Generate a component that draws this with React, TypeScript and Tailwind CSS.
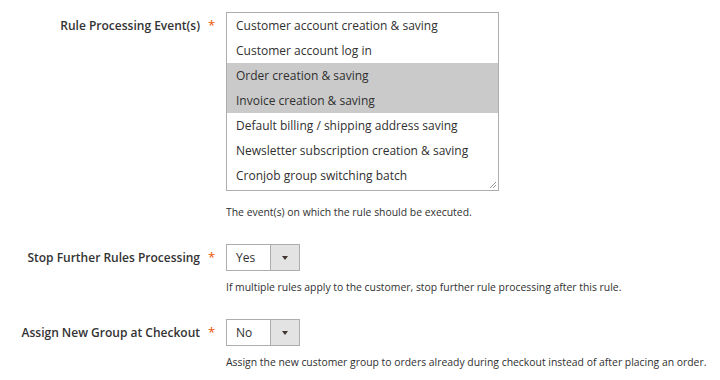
const events = [
  { label: "Customer account creation & saving", selected: false },
  { label: "Customer account log in", selected: false },
  { label: "Order creation & saving", selected: true },
  { label: "Invoice creation & saving", selected: true },
  { label: "Default billing / shipping address saving", selected: false },
  { label: "Newsletter subscription creation & saving", selected: false },
  { label: "Cronjob group switching batch", selected: false },
];

function FieldLabel({ text }: { text: string }) {
  return (
    <div className="flex shrink-0 items-center">
      <div className="w-[200px] text-right text-[12px] font-semibold text-[#333333]">
        {text}
      </div>
      <div className="w-[26px] pl-[8px] text-[13px] text-[#eb5202]">*</div>
    </div>
  );
}

function SelectBox({ value }: { value: string }) {
  return (
    <div className="flex h-[27px] w-[74px] border border-[#adadad] bg-white">
      <div className="flex flex-1 items-center pl-[9px] text-[12px] text-[#303030]">
        {value}
      </div>
      <div className="flex w-[29px] items-center justify-center border-l border-[#adadad] bg-[#e3e3e3]">
        <span className="h-0 w-0 border-x-[3.5px] border-t-[4px] border-x-transparent border-t-[#41362f]" />
      </div>
    </div>
  );
}

function HelpText({ text }: { text: string }) {
  return (
    <div className="text-[10.4px] leading-[16px] text-[#303030]">{text}</div>
  );
}

export default function App() {
  return (
    <div
      className="h-[380px] w-[720px] overflow-hidden bg-white pt-[12px]"
      style={{ fontFamily: '"Open Sans", sans-serif' }}
    >
      {/* Rule Processing Events */}
      <div className="flex">
        <div className="flex h-[28px] items-center">
          <FieldLabel text="Rule Processing Event(s)" />
        </div>
        <div>
          <div className="relative w-[273px] border border-[#adadad] bg-white pb-[2px]">
            {events.map((e) => (
              <div
                key={e.label}
                className={
                  "h-[25px] px-[9px] pt-[1px] text-[12px] leading-[24px] text-[#303030] " +
                  (e.selected ? "bg-[#cacaca]" : "")
                }
              >
                {e.label}
              </div>
            ))}
            <svg
              className="absolute bottom-[1px] right-[1px]"
              width="8"
              height="8"
              viewBox="0 0 8 8"
            >
              <path d="M7 1 L1 7 M7 4 L4 7" stroke="#9a9a9a" strokeWidth="1" />
            </svg>
          </div>
          <div className="mt-[13px]">
            <HelpText text="The event(s) on which the rule should be executed." />
          </div>
        </div>
      </div>

      {/* Stop Further Rules Processing */}
      <div className="mt-[24px] flex">
        <div className="flex h-[27px] items-center">
          <FieldLabel text="Stop Further Rules Processing" />
        </div>
        <div>
          <SelectBox value="Yes" />
          <div className="mt-[8px]">
            <HelpText text="If multiple rules apply to the customer, stop further rule processing after this rule." />
          </div>
        </div>
      </div>

      {/* Assign New Group at Checkout */}
      <div className="mt-[24px] flex">
        <div className="flex h-[27px] items-center">
          <FieldLabel text="Assign New Group at Checkout" />
        </div>
        <div>
          <SelectBox value="No" />
          <div className="mt-[8px]">
            <HelpText text="Assign the new customer group to orders already during checkout instead of after placing an order." />
          </div>
        </div>
      </div>
    </div>
  );
}
